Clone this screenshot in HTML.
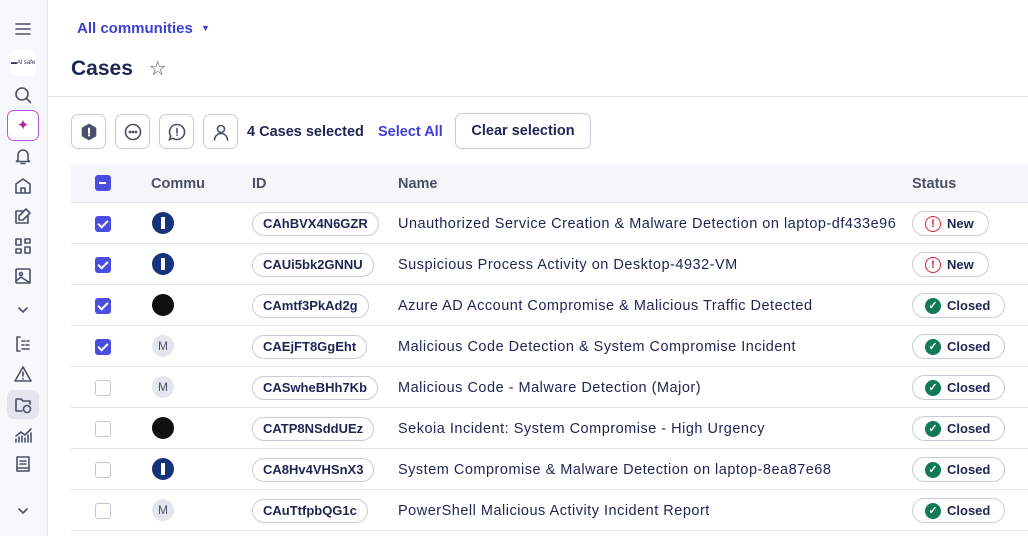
<!DOCTYPE html>
<html><head><style>
*{box-sizing:border-box;margin:0;padding:0}
body{width:1028px;height:536px;overflow:hidden;background:#fff;font-family:"Liberation Sans",sans-serif;color:#1e2553;position:relative}
.side{position:absolute;left:0;top:0;width:48px;height:536px;background:#f7f8fb;border-right:1px solid #e4e6ee}
.ic{position:absolute;left:12px;width:22px;height:22px}
.ic svg{width:22px;height:22px;fill:none;stroke:#4a5068;stroke-width:1.6;stroke-linecap:round;stroke-linejoin:round}
.top{position:absolute;left:77px;top:20px;font-size:15px;color:#3d3fd6;font-weight:bold}
.title{position:absolute;left:71px;top:56px;font-size:21px;font-weight:bold;color:#1e2553}
.hr{position:absolute;left:48px;right:0;top:96px;border-top:1px solid #e2e4ec}
.tb{position:absolute;top:114px;width:35px;height:35px;border:1px solid #c9ccd8;border-radius:7px;background:#fff}
.tb svg{position:absolute;left:8px;top:8px;width:18px;height:18px;fill:none;stroke:#4a5068;stroke-width:1.6;stroke-linecap:round}
.sel{position:absolute;left:247px;top:124px;font-size:14.5px;font-weight:bold}
.sa{position:absolute;left:378px;top:124px;font-size:14.5px;font-weight:bold;color:#3d3fd6}
.clr{position:absolute;left:455px;top:113px;width:136px;height:36px;border:1px solid #c9ccd8;border-radius:7px;font-size:14.5px;font-weight:bold;text-align:center;line-height:34px}
.thead{position:absolute;left:71px;right:0;top:164px;height:39px;background:#f5f6fa;border-bottom:1px solid #e2e4ec;font-size:14.5px;font-weight:bold;color:#4a5068}
.thead span{position:absolute;top:12px}
.row{position:absolute;left:71px;right:0;height:41px;border-bottom:1px solid #e2e4ec;font-size:14.5px}
.cb{position:absolute;left:24px;top:13px;width:16px;height:16px;border-radius:3px;border:1.5px solid #c3c6d2;background:#fff}
.cb.on{background:#4a4ee0;border-color:#4a4ee0}
.cb.on:after{content:"";position:absolute;left:4px;top:1px;width:4px;height:8px;border:solid #fff;border-width:0 2px 2px 0;transform:rotate(45deg)}
.av{position:absolute;left:81px;top:9px;width:22px;height:22px;border-radius:50%}
.m{background:#e4e6ee;color:#4a5068;font-size:12px;text-align:center;line-height:22px}
.blk{background:#111}
.lg{background:#15337a}
.lg:after{content:"";position:absolute;left:9px;top:5px;width:4px;height:12px;background:#fff}
.id{position:absolute;left:181px;top:9px;height:24px;border:1px solid #c9ccd8;border-radius:12px;padding:0 10px;font-size:13px;font-weight:bold;line-height:22px;color:#1e2553}
.nm{position:absolute;left:327px;top:13px;color:#1e2553;letter-spacing:0.5px}
.st{position:absolute;left:841px;top:8px;height:25px;border:1px solid #c9ccd8;border-radius:13px;padding:0 14px 0 12px;font-size:13px;font-weight:bold;display:flex;align-items:center}
.st i{display:flex;align-items:center;justify-content:center;width:16px;height:16px;border-radius:50%;margin-right:6px;font-style:normal;font-size:11px}
.new i{border:1.6px solid #d3203a;color:#d3203a}
.cl i{background:#0f7a55;color:#fff}
</style></head><body>
<div class="side">
<div class="ic" style="top:18px"><svg viewBox="0 0 22 22"><path d="M4 6h14M4 11h14M4 16h14"/></svg></div>
<div style="position:absolute;left:10px;top:50px;width:26px;height:26px;border-radius:8px;background:#fff;font-size:6px;line-height:26px;text-align:center;color:#335">▬Al safe</div>
<div class="ic" style="top:84px"><svg viewBox="0 0 22 22"><circle cx="10" cy="10" r="6"/><path d="M14.5 14.5l4 4"/></svg></div>
<div style="position:absolute;left:7px;top:110px;width:32px;height:31px;border-radius:7px;border:1.5px solid #b05ad8;background:#fff;color:#b0308e;text-align:center;line-height:29px;font-size:15px">✦</div>
<div class="ic" style="top:145px"><svg viewBox="0 0 22 22"><path d="M6 15V10a5 5 0 0110 0v5l1.5 1.5h-13zM9 18.5h4"/></svg></div>
<div class="ic" style="top:175px"><svg viewBox="0 0 22 22"><path d="M4 18V9l7-5 7 5v9zM9 18v-5h4v5"/></svg></div>
<div class="ic" style="top:205px"><svg viewBox="0 0 22 22"><path d="M16 11v7H4V6h7M14 4l4 4-7 7H7v-4z"/></svg></div>
<div class="ic" style="top:235px"><svg viewBox="0 0 22 22"><rect x="4" y="4" width="5" height="6"/><rect x="13" y="4" width="5" height="4"/><rect x="4" y="14" width="5" height="4"/><rect x="13" y="12" width="5" height="6"/></svg></div>
<div class="ic" style="top:265px"><svg viewBox="0 0 22 22"><rect x="4" y="4" width="14" height="14" rx="1"/><circle cx="9" cy="9" r="1.5"/><path d="M4 16l5-4 9 6"/></svg></div>
<div class="ic" style="top:299px"><svg viewBox="0 0 22 22"><path d="M7 9l4 4 4-4"/></svg></div>
<div class="ic" style="top:333px"><svg viewBox="0 0 22 22"><path d="M8 4H5v14h3M10 8h3M15 8h2M10 12h2M14 12h3M10 16h7"/></svg></div>
<div class="ic" style="top:363px"><svg viewBox="0 0 22 22"><path d="M11 4l8 14H3zM11 9v4M11 15.5v.5"/></svg></div>
<div style="position:absolute;left:7px;top:390px;width:32px;height:29px;border-radius:7px;background:#e2e5ee"></div>
<div class="ic" style="top:394px"><svg viewBox="0 0 22 22"><path d="M10 17H4V5h5l2 2h7v3"/><circle cx="15" cy="15" r="3.5"/></svg></div>
<div class="ic" style="top:424px"><svg viewBox="0 0 22 22"><path d="M4 18v-3M7 18v-5M10 18v-6M13 18v-4M16 18v-7M19 18v-9M4 12l5-4 4 3 6-6"/></svg></div>
<div class="ic" style="top:453px"><svg viewBox="0 0 22 22"><path d="M5 4h12v14H5zM8 8h6M8 11h6M5 15h12"/></svg></div>
<div class="ic" style="top:500px"><svg viewBox="0 0 22 22"><path d="M7 9l4 4 4-4"/></svg></div>
</div>
<div class="top">All communities <span style="font-size:9px;vertical-align:2px;margin-left:4px">▼</span></div>
<div class="title">Cases <span style="font-weight:normal;font-size:20px;margin-left:10px;color:#4a5068">☆</span></div>
<div class="hr"></div>
<div class="tb" style="left:71px"><svg viewBox="0 0 18 18"><path d="M9 1.5l6.5 3.7v7.6L9 16.5l-6.5-3.7V5.2z" fill="#4a5068"/><path d="M9 5.5v4.5M9 12v.5" stroke="#fff" stroke-width="2"/></svg></div>
<div class="tb" style="left:115px"><svg viewBox="0 0 18 18"><circle cx="9" cy="9" r="7.5"/><circle cx="6" cy="9" r=".6" fill="#4a5068"/><circle cx="9" cy="9" r=".6" fill="#4a5068"/><circle cx="12" cy="9" r=".6" fill="#4a5068"/></svg></div>
<div class="tb" style="left:159px"><svg viewBox="0 0 18 18"><path d="M9 1.5a7.5 7.5 0 11-4 13.8L1.5 16.5l1.2-3.5A7.5 7.5 0 019 1.5zM9 5.5v4.5M9 12v.3"/></svg></div>
<div class="tb" style="left:203px"><svg viewBox="0 0 18 18"><circle cx="9" cy="6" r="3.5"/><path d="M2.5 17a6.5 6.5 0 0113 0"/></svg></div>
<div class="sel">4 Cases selected</div>
<div class="sa">Select All</div>
<div class="clr">Clear selection</div>
<div class="thead"><div class="cb on" style="top:11px"></div><span style="left:80px">Commu</span><span style="left:181px">ID</span><span style="left:327px">Name</span><span style="left:841px">Status</span></div>
<style>.thead .cb.on:after{left:3px;top:6px;width:7px;height:0;border-width:0 0 2px 0;transform:none}</style>

<div class="row" style="top:203px"><div class="cb on"></div><div class="av lg"></div><div class="id">CAhBVX4N6GZR</div><div class="nm">Unauthorized Service Creation &amp; Malware Detection on laptop-df433e96</div><div class="st new"><i>!</i>New</div></div>
<div class="row" style="top:244px"><div class="cb on"></div><div class="av lg"></div><div class="id">CAUi5bk2GNNU</div><div class="nm">Suspicious Process Activity on Desktop-4932-VM</div><div class="st new"><i>!</i>New</div></div>
<div class="row" style="top:285px"><div class="cb on"></div><div class="av blk"></div><div class="id">CAmtf3PkAd2g</div><div class="nm">Azure AD Account Compromise &amp; Malicious Traffic Detected</div><div class="st cl"><i>✓</i>Closed</div></div>
<div class="row" style="top:326px"><div class="cb on"></div><div class="av m">M</div><div class="id">CAEjFT8GgEht</div><div class="nm">Malicious Code Detection &amp; System Compromise Incident</div><div class="st cl"><i>✓</i>Closed</div></div>
<div class="row" style="top:367px"><div class="cb"></div><div class="av m">M</div><div class="id">CASwheBHh7Kb</div><div class="nm">Malicious Code - Malware Detection (Major)</div><div class="st cl"><i>✓</i>Closed</div></div>
<div class="row" style="top:408px"><div class="cb"></div><div class="av blk"></div><div class="id">CATP8NSddUEz</div><div class="nm">Sekoia Incident: System Compromise - High Urgency</div><div class="st cl"><i>✓</i>Closed</div></div>
<div class="row" style="top:449px"><div class="cb"></div><div class="av lg"></div><div class="id">CA8Hv4VHSnX3</div><div class="nm">System Compromise &amp; Malware Detection on laptop-8ea87e68</div><div class="st cl"><i>✓</i>Closed</div></div>
<div class="row" style="top:490px"><div class="cb"></div><div class="av m">M</div><div class="id">CAuTtfpbQG1c</div><div class="nm">PowerShell Malicious Activity Incident Report</div><div class="st cl"><i>✓</i>Closed</div></div>
</body></html>
